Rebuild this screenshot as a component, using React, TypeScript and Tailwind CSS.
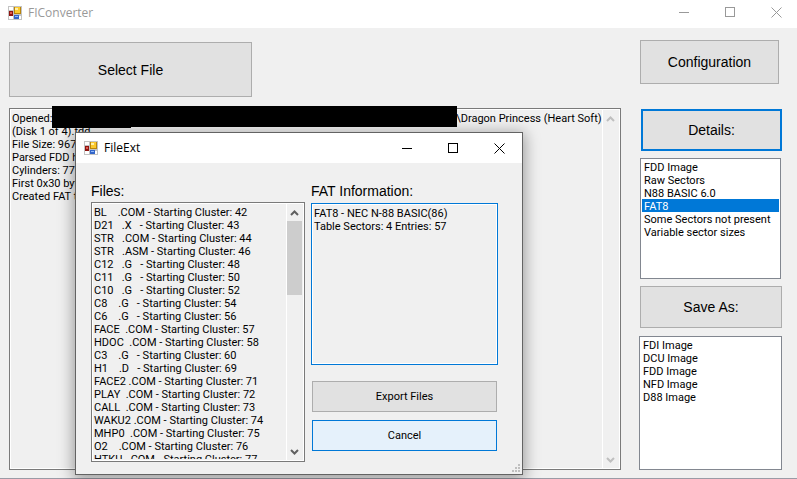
import type { ReactNode } from "react";

const REDACTED_WIDTH_IN_SPACES = 148;

const LOG = [
  "Opened:" + " ".repeat(REDACTED_WIDTH_IN_SPACES) + "\\Dragon Princess (Heart Soft)",
  "(Disk 1 of 4).fdd",
  "File Size: 967776",
  "Parsed FDD header",
  "Cylinders: 77 Heads",
  "First 0x30 bytes",
  "Created FAT table",
].join("\n");

const FILES = [
  "BL    .COM - Starting Cluster: 42",
  "D21   .X   - Starting Cluster: 43",
  "STR   .COM - Starting Cluster: 44",
  "STR   .ASM - Starting Cluster: 46",
  "C12   .G   - Starting Cluster: 48",
  "C11   .G   - Starting Cluster: 50",
  "C10   .G   - Starting Cluster: 52",
  "C8    .G   - Starting Cluster: 54",
  "C6    .G   - Starting Cluster: 56",
  "FACE  .COM - Starting Cluster: 57",
  "HDOC  .COM - Starting Cluster: 58",
  "C3    .G   - Starting Cluster: 60",
  "H1    .D   - Starting Cluster: 69",
  "FACE2 .COM - Starting Cluster: 71",
  "PLAY  .COM - Starting Cluster: 72",
  "CALL  .COM - Starting Cluster: 73",
  "WAKU2 .COM - Starting Cluster: 74",
  "MHP0  .COM - Starting Cluster: 75",
  "O2    .COM - Starting Cluster: 76",
  "HTKU  .COM - Starting Cluster: 77",
].join("\n");

const DETAILS = [
  "FDD Image",
  "Raw Sectors",
  "N88 BASIC 6.0",
  "FAT8",
  "Some Sectors not present",
  "Variable sector sizes",
];

const FORMATS = ["FDI Image", "DCU Image", "FDD Image", "NFD Image", "D88 Image"];

function FormIcon() {
  return (
    <svg width="14" height="14" viewBox="0 0 14 14" shapeRendering="crispEdges" aria-hidden="true">
      <rect width="14" height="14" fill="#c3c3c3" />
      <rect x="1" y="1" width="4" height="3" fill="#fff" />
      <rect x="1" y="10" width="4" height="3" fill="#fff" />
      <rect x="11" y="10" width="2" height="3" fill="#fff" />
      <rect x="1" y="5" width="4" height="5" fill="#8e1410" />
      <rect x="2" y="6" width="2" height="2" fill="#e0584c" />
      <rect x="6" y="1" width="7" height="7" fill="#b9850c" />
      <rect x="7" y="1" width="5" height="6" fill="#fcc92c" />
      <rect x="7" y="2" width="3" height="2" fill="#fff0a8" />
      <rect x="6" y="9" width="5" height="4" fill="#3465c8" />
      <rect x="7" y="10" width="3" height="1" fill="#8fb8fa" />
    </svg>
  );
}

function TitleBar({ title, muted }: { title: string; muted?: boolean }) {
  return (
    <header
      className={`flex shrink-0 items-center bg-white pl-2 ${
        muted ? "h-7 pb-[3px] text-[#999999]" : "h-[30px] text-black"
      }`}
    >
      <FormIcon />
      <h1 className="ml-1.5 flex-1 font-['Open_Sans',sans-serif] text-[12px] leading-4">{title}</h1>
      <div className={`flex h-full items-center gap-[35px] ${muted ? "pr-[15px]" : "pr-[17px]"}`}>
        <button aria-label="Minimize">
          <svg className="block" width="11" height="11" stroke="currentColor" fill="none" aria-hidden="true">
            <path d="M0 5.5H10" />
          </svg>
        </button>
        <button aria-label="Maximize">
          <svg className="block" width="11" height="11" stroke="currentColor" fill="none" aria-hidden="true">
            <rect x=".5" y=".5" width="9" height="9" />
          </svg>
        </button>
        <button aria-label="Close">
          <svg className="block" width="11" height="11" stroke="currentColor" fill="none" aria-hidden="true">
            <path d="M.5.5l10 10M10.500.5l-10 10" />
          </svg>
        </button>
      </div>
    </header>
  );
}

function Chevron({ down }: { down?: boolean }) {
  return (
    <svg className="block" width="9" height="8" viewBox="0 0 9 8" fill="none" stroke="currentColor" strokeWidth="2" aria-hidden="true">
      <path d={down ? "M1 2l3.500 3.500L8 2" : "M1 6l3.500-3.500L8 6"} />
    </svg>
  );
}

function ScrollBar({ disabled }: { disabled?: boolean }) {
  return (
    <div
      className={`mr-px flex w-4 shrink-0 flex-col border-l border-white ${
        disabled ? "text-[#bfbfbf]" : "text-[#606060]"
      }`}
    >
      <button aria-label="Scroll up" disabled={disabled} className="flex h-[17px] items-center justify-center">
        <Chevron />
      </button>
      <div className="flex-1">{!disabled && <div className="h-[74px] bg-[#cdcdcd]" />}</div>
      <button aria-label="Scroll down" disabled={disabled} className="flex h-[17px] items-center justify-center">
        <Chevron down />
      </button>
    </div>
  );
}

function TextPane({
  id,
  label,
  value,
  className,
  children,
}: {
  id: string;
  label?: string;
  value: string;
  className: string;
  children?: ReactNode;
}) {
  return (
    <div className={`flex border bg-white p-px ${className}`}>
      <div className="flex min-w-0 flex-1 bg-[#f0f0f0]">
        <textarea
          id={id}
          aria-label={label}
          readOnly
          value={value}
          className="mb-px block min-w-0 flex-1 resize-none overflow-hidden whitespace-pre pl-px pt-0.5 font-['Roboto','Liberation_Sans',sans-serif] text-[11px] leading-[13px] outline-none"
        />
        {children}
      </div>
    </div>
  );
}

function ListBox({
  label,
  items,
  selected,
  className,
}: {
  label: string;
  items: string[];
  selected?: string;
  className: string;
}) {
  return (
    <select
      aria-label={label}
      size={items.length}
      defaultValue={selected}
      className={`block appearance-none overflow-hidden rounded-none border border-[#828790] bg-white p-px font-['Roboto','Liberation_Sans',sans-serif] text-[11px] leading-[13px] outline-none ${className}`}
    >
      {items.map((item) => (
        <option
          key={item}
          className="h-[13px] min-h-0 p-0 pl-0.5 pt-px leading-[13px] checked:bg-[linear-gradient(#0078d7,#0078d7)] checked:[-webkit-text-fill-color:white]"
        >
          {item}
        </option>
      ))}
    </select>
  );
}

function FileDialog() {
  return (
    <section
      role="dialog"
      aria-label="FileExt"
      className="absolute left-[75px] top-[132px] flex h-[343px] w-[448px] flex-col border border-[#636363] bg-[#f0f0f0] shadow-[0_3px_14px_2px_rgba(0,0,0,0.35)]"
    >
      <TitleBar title="FileExt" />
      <div className="flex flex-1 gap-1.5 pb-3 pl-[15px] pr-6 pt-5">
        <div className="flex w-[214px] flex-col">
          <label htmlFor="files" className="h-[19px] text-[14px] leading-4">
            Files:
          </label>
          <TextPane id="files" value={FILES} className="flex-1 border-[#7a7a7a]">
            <ScrollBar />
          </TextPane>
        </div>
        <div className="flex flex-1 flex-col">
          <label htmlFor="fat" className="h-5 text-[14px] leading-4">
            FAT Information:
          </label>
          <TextPane
            id="fat"
            value={"FAT8 - NEC N-88 BASIC(86)\nTable Sectors: 4 Entries: 57"}
            className="h-[162px] border-[#0078d7]"
          />
          <div className="flex flex-col gap-2 px-px pt-4 font-['Roboto','Liberation_Sans',sans-serif] text-[11px]">
            <button className="h-[31px] border border-[#adadad] bg-[#e1e1e1] pt-0.5">Export Files</button>
            <button className="h-[31px] border border-[#0078d7] bg-[#e5f1fb] pt-0.5">Cancel</button>
          </div>
        </div>
      </div>
      <svg className="absolute bottom-0.5 right-0.5" width="8" height="8" fill="#bfbfbf" aria-hidden="true">
        <path d="M6 0h2v2H6zM3 3h2v2H3zM6 3h2v2H6zM0 6h2v2H0zM3 6h2v2H3zM6 6h2v2H6z" />
      </svg>
    </section>
  );
}

export default function App() {
  return (
    <div className="relative flex h-screen min-h-[479px] flex-col border-b border-[#9a9ba6] bg-[#f0f0f0] font-['Liberation_Sans',Arial,sans-serif] text-black">
      <TitleBar title="FIConverter" muted />
      <main className="flex min-h-0 flex-1 gap-[18px] pb-2 pl-[9px] pr-[15px] pt-3">
        <div className="flex min-w-0 flex-1 flex-col pt-0.5">
          <button className="h-[55px] w-[243px] border border-[#adadad] bg-[#e1e1e1] pt-0.5 text-[14px]">
            Select File
          </button>
          <div className="relative mt-[11px] flex flex-1">
            <TextPane id="log" label="Log" value={LOG} className="min-w-0 flex-1 border-[#7a7a7a]">
              <ScrollBar disabled />
            </TextPane>
            <div className="absolute -top-0.5 left-[43px] h-[21px] w-[405px] bg-black" />
            <div className="absolute left-[43px] top-[19px] h-px w-[79px] bg-black" />
          </div>
        </div>
        <div className="flex w-[143px] shrink-0 flex-col">
          <button className="ml-px h-11 w-[139px] border border-[#adadad] bg-[#e1e1e1] text-[14px]">
            Configuration
          </button>
          <button className="ml-0.5 mt-[25px] h-[42px] border-2 border-[#0078d7] bg-[#e1e1e1] text-[14px]">
            Details:
          </button>
          <ListBox label="Details" items={DETAILS} selected="FAT8" className="mx-px mt-[7px] h-[121px]" />
          <button className="ml-px mt-[7px] h-[42px] border border-[#adadad] bg-[#e1e1e1] text-[14px]">
            Save As:
          </button>
          <ListBox label="Save as" items={FORMATS} className="mt-2 flex-1" />
        </div>
      </main>
      <FileDialog />
    </div>
  );
}
